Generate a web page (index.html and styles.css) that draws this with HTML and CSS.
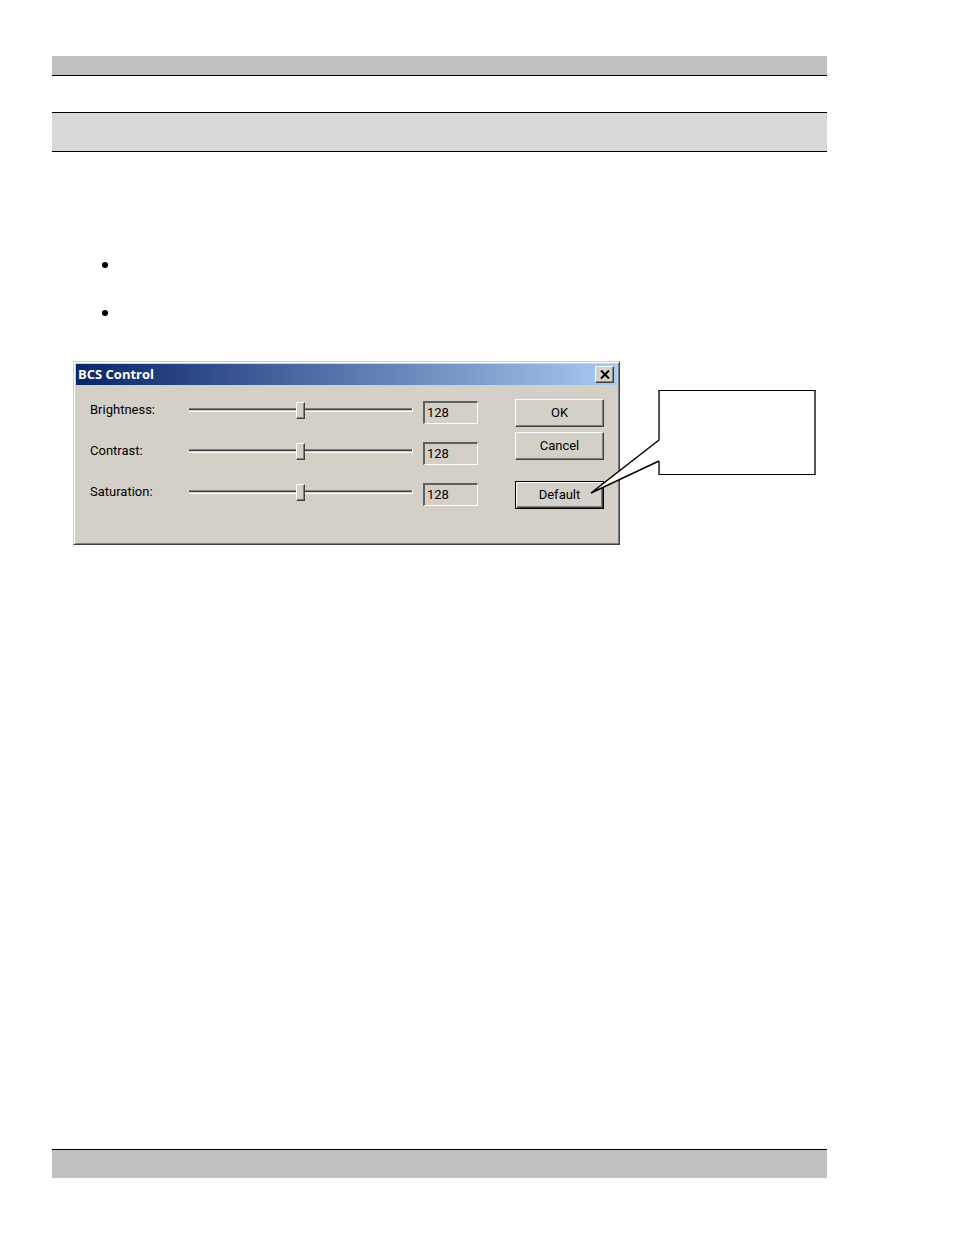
FILE: index.html
```
<!DOCTYPE html>
<html lang="en">
<head>
    <meta charset="UTF-8">
    <meta name="viewport" content="width=device-width, initial-scale=1.0">
    <title>BCS Control</title>
    <link rel="stylesheet" href="styles.css">
</head>
<body>

<header class="page-header"></header>
<div class="section-title"></div>

<main>
    <ul class="notes">
        <li></li>
        <li></li>
    </ul>

    <div class="figure">
        <section class="dialog">
            <div class="title-bar">
                <h1>BCS Control</h1>
                <button class="close" type="button" aria-label="Close">
                    <svg width="10" height="9" viewBox="0 0 10 9"><path d="M1 0.5L9 8.5M9 0.5L1 8.5" stroke="#000" stroke-width="2"/></svg>
                </button>
            </div>
            <form class="dialog-body">
                <div class="fields">
                    <label for="brightness">Brightness:</label>
                    <input type="range" id="brightness" min="0" max="255" value="128">
                    <input type="text" class="value" aria-label="Brightness value" value="128" readonly>

                    <label for="contrast">Contrast:</label>
                    <input type="range" id="contrast" min="0" max="255" value="128">
                    <input type="text" class="value" aria-label="Contrast value" value="128" readonly>

                    <label for="saturation">Saturation:</label>
                    <input type="range" id="saturation" min="0" max="255" value="128">
                    <input type="text" class="value" aria-label="Saturation value" value="128" readonly>
                </div>
                <div class="buttons">
                    <button type="button">OK</button>
                    <button type="button">Cancel</button>
                    <button type="reset" class="default">Default</button>
                </div>
            </form>
        </section>

        <div class="callout">
            <svg class="tail" width="70" height="58" viewBox="0 0 70 58">
                <polygon points="70,1 70,22 1,54" fill="#fff"/>
                <path d="M69 1L1 54L69 22" fill="none" stroke="#000" stroke-width="1.5"/>
            </svg>
        </div>
    </div>
</main>

<footer class="page-footer"></footer>

</body>
</html>
```

FILE: styles.css
```
* {
    box-sizing: border-box;
}

body {
    display: flex;
    flex-direction: column;
    min-height: 100vh;
    margin: 0;
    padding: 56px 127px 57px 52px;
    background: #fff;
    font-family: Roboto, Arial, sans-serif;
    font-size: 13px;
    color: #000;
}

.page-header {
    height: 20px;
    background: #c0c0c0;
    border-bottom: 1px solid #000;
}

.section-title {
    height: 40px;
    margin-top: 36px;
    background: #d9d9d9;
    border-top: 1px solid #000;
    border-bottom: 1px solid #000;
}

.page-footer {
    height: 29px;
    margin-top: auto;
    background: #c0c0c0;
    border-top: 1px solid #000;
}

.notes {
    display: grid;
    gap: 42px;
    margin: 110px 0 45px;
    padding-left: 50px;
    list-style: none;
}

.notes li {
    width: 6px;
    height: 6px;
    border-radius: 50%;
    background: #000;
}

.figure {
    display: flex;
    align-items: flex-start;
    gap: 38px;
    padding: 0 11px 0 21px;
}

/* dialog */
.dialog {
    flex: 1;
    padding: 2px;
    background: #d4d0c8;
    border: 1px solid;
    border-color: #d4d0c8 #404040 #404040 #d4d0c8;
    box-shadow: inset 1px 1px #fff, inset -1px -1px #808080;
}

.title-bar {
    display: flex;
    align-items: center;
    justify-content: space-between;
    height: 21px;
    padding: 0 3px 0 2px;
    background: linear-gradient(to right, #0a246a, #a6caf0);
}

.title-bar h1 {
    margin: 0;
    font-family: "Open Sans", "Noto Sans", sans-serif;
    font-size: 13px;
    line-height: 19px;
    color: #fff;
}

.dialog-body {
    display: flex;
    gap: 37px;
    padding: 14px 13px 33px 14px;
}

.fields {
    flex: 1;
    display: grid;
    grid-template-columns: 89px 1fr 55px;
    grid-auto-rows: 23px;
    align-items: start;
    gap: 18px 10px;
    padding-top: 2px;
}

.fields label {
    line-height: 18px;
}

input[type="range"] {
    -webkit-appearance: none;
    appearance: none;
    width: 100%;
    height: 17px;
    margin: 0;
    background: none;
}

input[type="range"]::-webkit-slider-runnable-track {
    height: 4px;
    background: linear-gradient(#808080 1px, #404040 1px, #404040 2px, #d4d0c8 2px, #d4d0c8 3px, #fff 3px);
    border-right: 1px solid #fff;
}

input[type="range"]::-webkit-slider-thumb {
    -webkit-appearance: none;
    width: 9px;
    height: 17px;
    margin-top: -6px;
    background: #d4d0c8;
    border: 1px solid;
    border-color: #fff #404040 #404040 #fff;
    box-shadow: inset -1px -1px #808080;
}

.value {
    width: 100%;
    height: 23px;
    padding: 0 2px 1px;
    background: #d4d0c8;
    border: 2px solid;
    border-color: #606060 #fff #fff #606060;
    border-right-width: 1px;
    border-bottom-width: 1px;
    font: inherit;
}

.buttons {
    display: flex;
    flex-direction: column;
    gap: 5px;
    width: 89px;
}

button {
    padding: 0;
    background: #d4d0c8;
    border: 1px solid;
    border-color: #fff #404040 #404040 #fff;
    box-shadow: inset -1px -1px #808080;
    font: inherit;
    color: #000;
}

.buttons button {
    height: 28px;
    padding-bottom: 2px;
}

.buttons .default {
    margin-top: 16px;
    border-color: #000;
    box-shadow: inset 1px 1px #fff, inset -1px -1px #404040, inset -2px -2px #808080;
}

.close {
    display: flex;
    align-items: center;
    justify-content: center;
    width: 19px;
    height: 17px;
}

/* balloon pointing at the Default button */
.callout {
    position: relative;
    width: 158px;
    height: 85px;
    margin-top: 29px;
    background: #fff;
    border: 1px solid #000;
    border-left: 2px solid #555;
    border-right: 2px solid #555;
}

.tail {
    position: absolute;
    top: 48px;
    left: -70px;
}
```
